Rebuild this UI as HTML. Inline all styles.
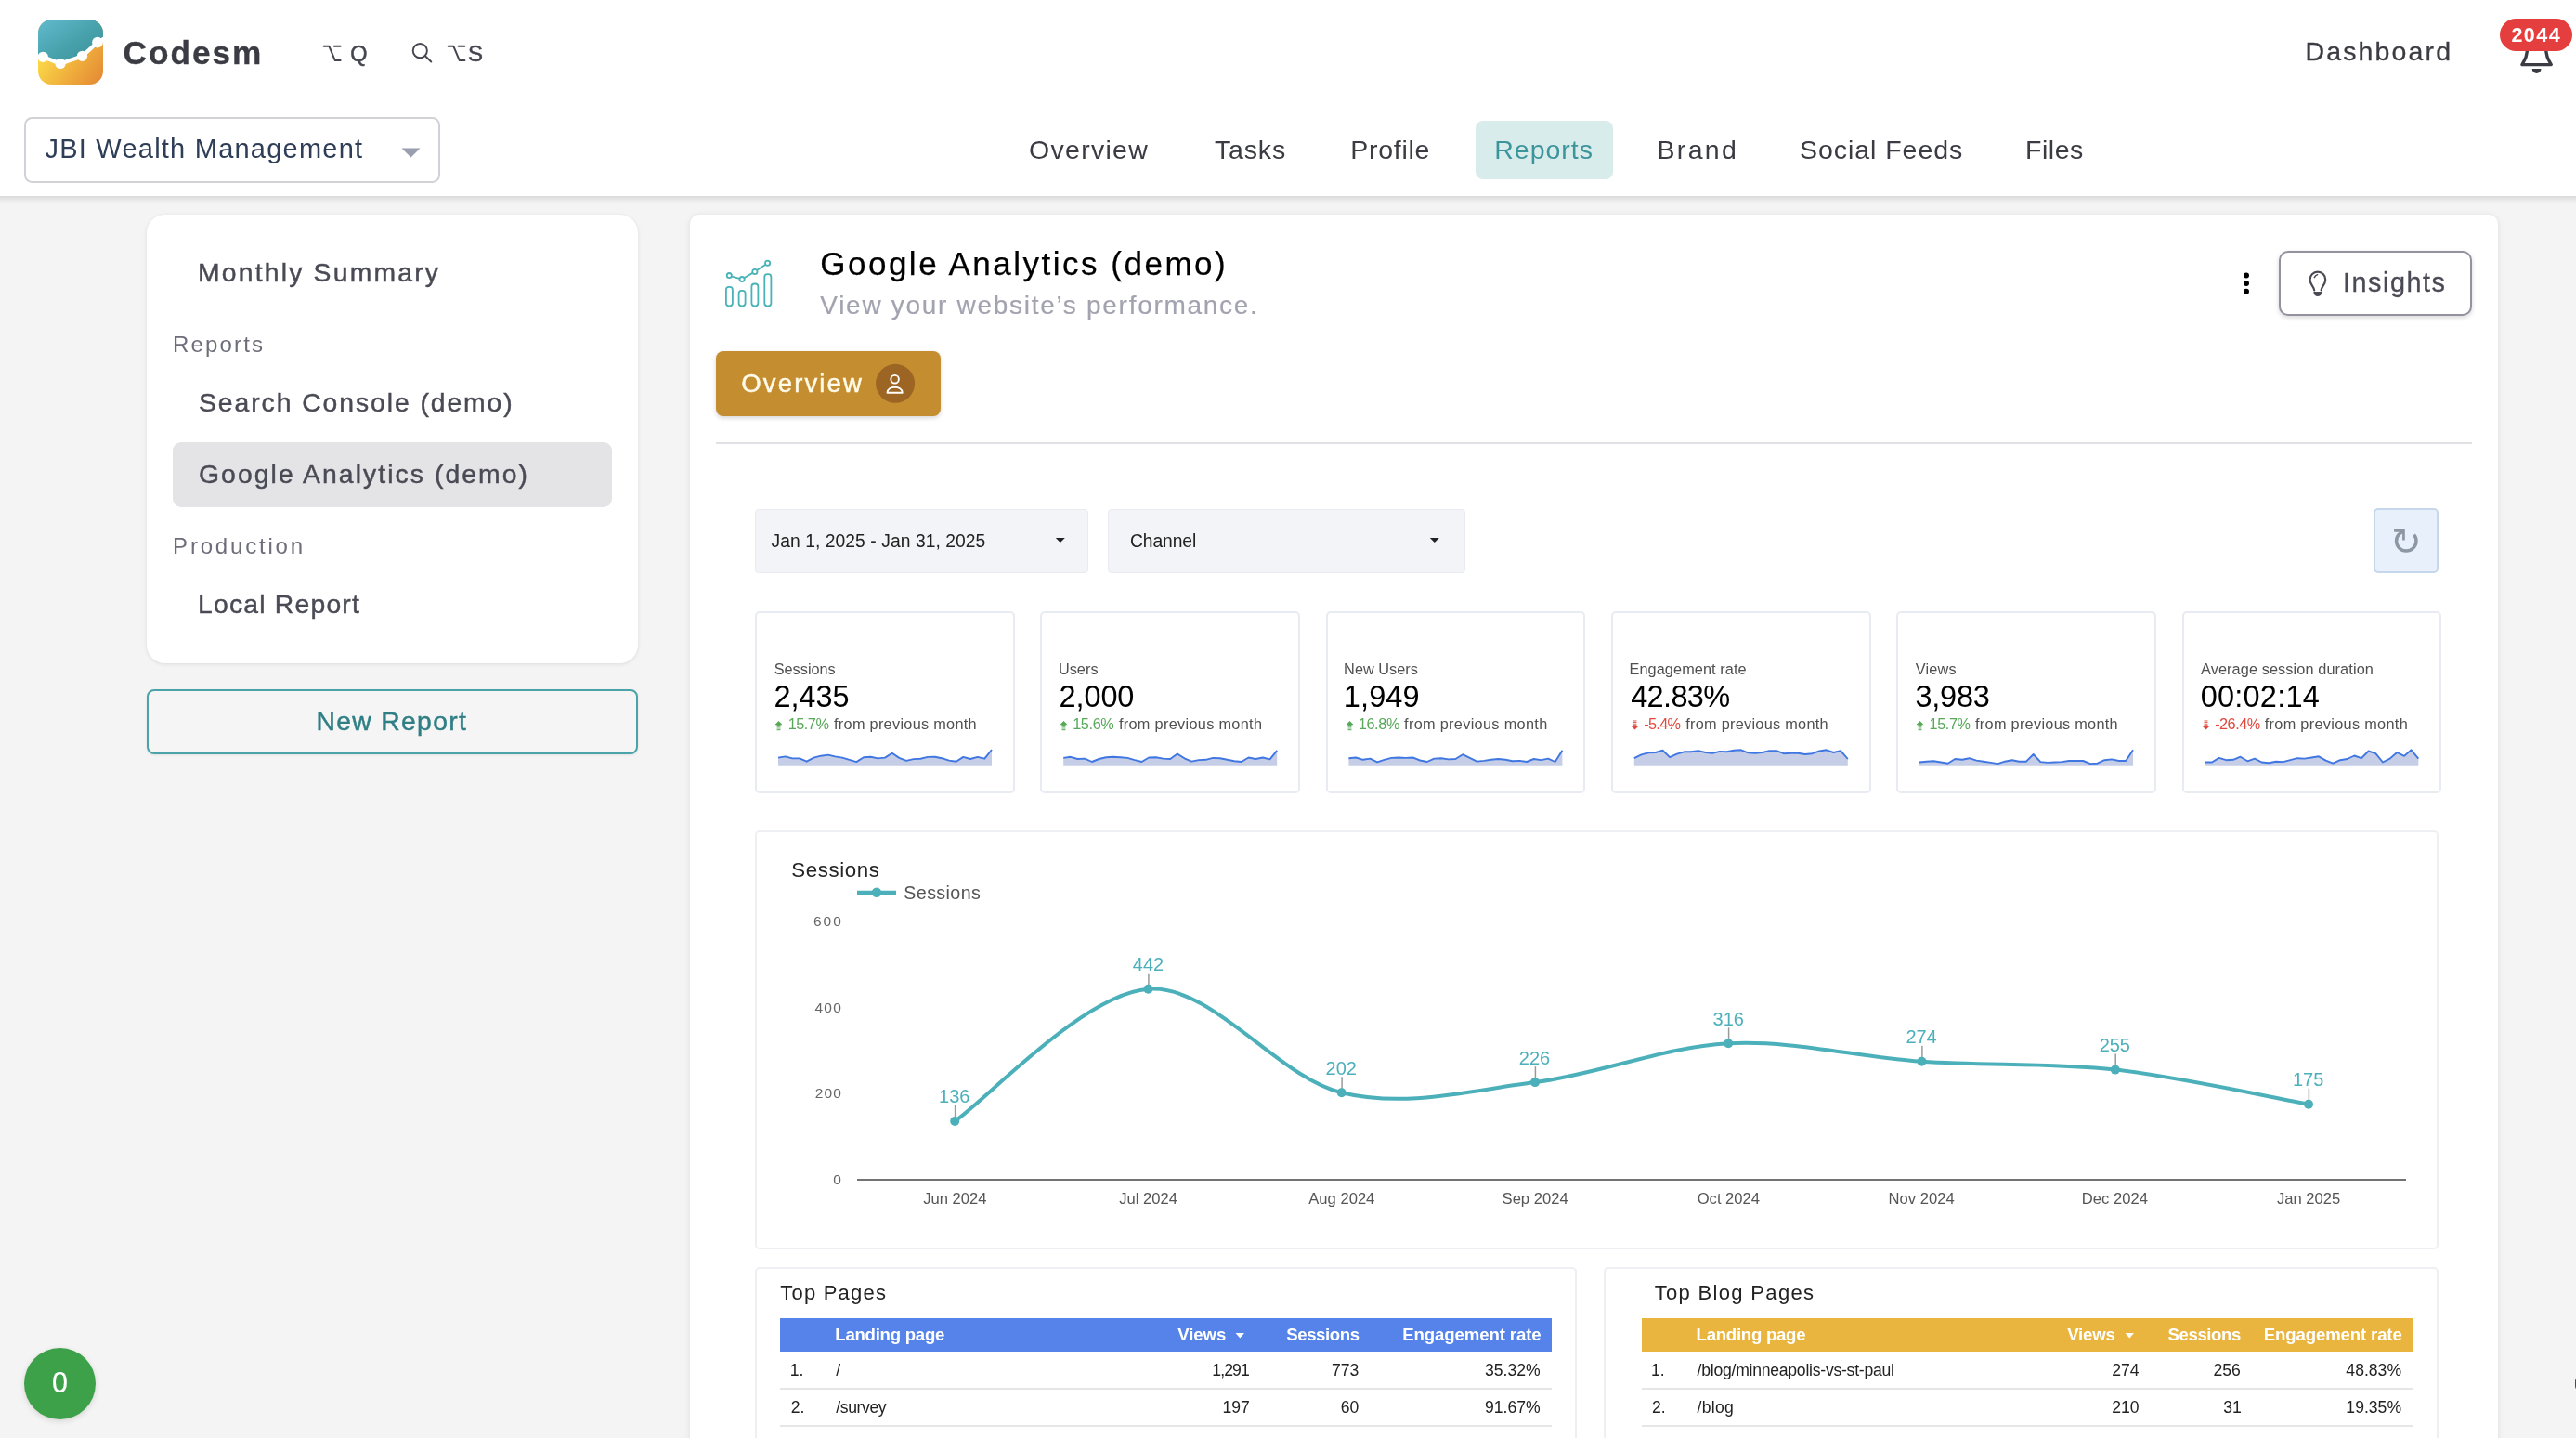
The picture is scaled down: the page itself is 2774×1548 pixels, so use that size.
<!DOCTYPE html>
<html lang="en">
<head>
<meta charset="utf-8">
<title>Codesm - Google Analytics (demo)</title>
<style>
html,body{margin:0;padding:0;}
html{width:2774px;height:1548px;overflow:hidden;}
body{width:2774px;height:1548px;overflow:hidden;position:relative;background:#f4f4f4;font-family:"Liberation Sans", sans-serif;}
#root{position:absolute;left:0;top:0;width:2774px;height:1548px;overflow:hidden;will-change:transform;}
.b{position:absolute;box-sizing:border-box;}
.t{position:absolute;white-space:pre;line-height:1;font-family:"Liberation Sans", sans-serif;}
svg{position:absolute;overflow:visible;}
</style>
</head>
<body>
<div id="root">
<div class="b" style="left:-30px;top:-10px;width:2834px;height:221px;background:#fff;box-shadow:0 2px 7px rgba(0,0,0,.16);"></div>
<svg style="left:41px;top:21px" width="70" height="70" viewBox="0 0 70 70">
<defs>
<linearGradient id="lgT" x1="0" y1="0" x2="1" y2="1"><stop offset="0" stop-color="#62bace"/><stop offset=".55" stop-color="#46a0aa"/><stop offset="1" stop-color="#3b8f98"/></linearGradient>
<linearGradient id="lgB" x1="0" y1="0.3" x2="1" y2="1"><stop offset="0" stop-color="#ffe74e"/><stop offset=".3" stop-color="#f7cb44"/><stop offset=".62" stop-color="#eeaa3b"/><stop offset="1" stop-color="#e38634"/></linearGradient>
<clipPath id="lgC"><rect x="0" y="0" width="70" height="70" rx="14.5" ry="14.5"/></clipPath>
</defs>
<g clip-path="url(#lgC)">
<rect width="70" height="70" fill="url(#lgB)"/>
<path d="M0 0H70V24.6L47.5 39.5L24 47.5L5.3 40.3L0 40.3Z" fill="url(#lgT)"/>
<path d="M-2 40.3L5.3 40.3L24 47.5L47.5 39.5L64 24.6L72 20" fill="none" stroke="#fff" stroke-width="4.2" stroke-linejoin="round"/>
<circle cx="5.3" cy="40.3" r="5.6" fill="#fff"/><circle cx="24" cy="47.5" r="5.6" fill="#fff"/><circle cx="47.5" cy="39.3" r="5.6" fill="#fff"/><circle cx="64" cy="24.6" r="5.9" fill="#fff"/>
</g></svg>
<svg style="left:0;top:0" width="600" height="100" viewBox="0 0 600 100" fill="none" stroke="#45454f" stroke-width="2" stroke-linecap="round" stroke-linejoin="round">
<path d="M348.6 49.7H354.3L360.8 65.1H366.6M359.8 49.7H366.6"/>
<path d="M482.6 49.7H488.3L494.8 65.1H500.4M493.6 49.7H500.4"/>
<circle cx="452.3" cy="54.6" r="7.6" stroke-width="1.9"/><path d="M458 60.3L464.3 66.5" stroke-width="1.9"/>
</svg>
<div class="b" style="left:26px;top:126px;width:447.5px;height:71px;background:#fff;border:2px solid #d1d1d8;border-radius:8.5px;"></div>
<svg style="left:432px;top:159px" width="22" height="12" viewBox="0 0 22 12"><path d="M0.5 0.5H20.5L10.5 10.5Z" fill="#9a9eae"/></svg>
<div class="b" style="left:1589px;top:130px;width:148px;height:63px;background:#d9ecec;border-radius:8px;"></div>
<svg style="left:2700px;top:0" width="74" height="100" viewBox="2700 0 74 100" fill="none" stroke="#3b3b43" stroke-width="3.4" stroke-linejoin="round" stroke-linecap="round">
<path d="M2721.6 50C2721.6 60 2719.5 63.5 2715.9 69.6H2747.3C2743.7 63.5 2741.6 60 2741.6 50"/>
<path d="M2726.7 74H2736.5A4.9 4.9 0 0 1 2726.7 74Z" fill="#3b3b43" stroke="none"/>
</svg>
<div class="b" style="left:2692px;top:20px;width:78px;height:35px;background:#e53e3e;border-radius:17.5px;"></div>
<div class="b" style="left:158px;top:231px;width:529px;height:483px;background:#fff;border-radius:20px;box-shadow:0 1px 4px rgba(0,0,0,.10);"></div>
<div class="b" style="left:186px;top:476px;width:473px;height:70px;background:#e4e4e6;border-radius:9px;"></div>
<div class="b" style="left:158px;top:742px;width:529px;height:70px;background:#f5f5f5;border:2px solid #4aa3a8;border-radius:8px;box-shadow:0 1px 3px rgba(0,0,0,.08);"></div>
<div class="b" style="left:26px;top:1451px;width:77px;height:77px;background:#3da14a;border-radius:38.5px;box-shadow:0 2px 6px rgba(0,0,0,.13);"></div>
<div class="b" style="left:2772.8px;top:1481px;width:12px;height:17px;background:#7b10f0;border-radius:6px;"></div>
<div class="b" style="left:743px;top:231px;width:1947px;height:1400px;background:#fff;border-radius:10px;box-shadow:0 1px 6px rgba(0,0,0,.10);"></div>
<svg style="left:770px;top:270px" width="80" height="70" viewBox="770 270 80 70" fill="none" stroke="#4ab3b8" stroke-width="1.8">
<rect x="781.9" y="308.8" width="7" height="20.5" rx="3"/>
<rect x="795.6" y="312.8" width="7" height="16.5" rx="3"/>
<rect x="809.4" y="305.5" width="7" height="23.8" rx="3"/>
<rect x="823.3" y="295.2" width="7.1" height="34.1" rx="3"/>
<path d="M788.2 297.6L796.3 299.8M801.6 299L810.4 293.9M815.4 290.8L824.1 284.9"/>
<circle cx="785.3" cy="296.6" r="2.6"/><circle cx="799.1" cy="300.6" r="2.6"/><circle cx="812.9" cy="292.5" r="2.6"/><circle cx="826.6" cy="283.2" r="2.6"/>
</svg>
<svg style="left:2410px;top:290px" width="20" height="30" viewBox="2410 290 20 30"><circle cx="2419" cy="296.4" r="3" fill="#000"/><circle cx="2419" cy="305.1" r="3" fill="#000"/><circle cx="2419" cy="313.8" r="3" fill="#000"/></svg>
<div class="b" style="left:2454px;top:270px;width:208px;height:69.5px;background:#fff;border:2px solid #92939f;border-radius:10px;box-shadow:0 2px 5px rgba(0,0,0,.16);"></div>
<svg style="left:2480px;top:285px" width="32" height="40" viewBox="2480 285 32 40" fill="none" stroke="#4a4a55" stroke-width="2.2" stroke-linecap="round">
<path d="M2492.2 312.5C2492 308.5 2487.6 306.5 2487.6 300.9A8.3 8.3 0 0 1 2504.2 300.9C2504.2 306.5 2499.8 308.5 2499.6 312.5"/>
<path d="M2492.3 298.6Q2493.3 296.3 2495.6 295.6" stroke-width="1.5"/>
<path d="M2491.4 313.9H2500.4V314.6A4.5 4.3 0 0 1 2491.4 314.6Z" fill="#4a4a55" stroke="none"/>
</svg>
<div class="b" style="left:771px;top:378px;width:242px;height:70px;background:#c48d30;border-radius:8px;box-shadow:0 2px 5px rgba(0,0,0,.17);"></div>
<svg style="left:940px;top:390px" width="50" height="50" viewBox="940 390 50 50">
<circle cx="964.1" cy="412.8" r="21" fill="#9c6523"/>
<circle cx="963.6" cy="408.2" r="4.3" fill="none" stroke="#fff" stroke-width="1.9"/>
<path d="M955.5 422.8C955.5 414.8 971.7 414.8 971.7 422.8Z" fill="none" stroke="#fff" stroke-width="1.9" stroke-linejoin="round"/>
</svg>
<div class="b" style="left:771px;top:475.5px;width:1891px;height:2px;background:#e1e1e5;"></div>
<div class="b" style="left:812.6px;top:547.5px;width:359.6px;height:69px;background:#f3f4f7;border:1px solid #e9ebf0;border-radius:4px;"></div>
<svg style="left:1136px;top:578px" width="12" height="8" viewBox="0 0 12 8"><path d="M0.8 1L10.8 1L5.8 6Z" fill="#222"/></svg>
<div class="b" style="left:1193.3px;top:547.5px;width:384.5px;height:69px;background:#f3f4f7;border:1px solid #e9ebf0;border-radius:4px;"></div>
<svg style="left:1538.5px;top:578px" width="12" height="8" viewBox="0 0 12 8"><path d="M0.8 1L10.8 1L5.8 6Z" fill="#222"/></svg>
<div class="b" style="left:2556px;top:547.2px;width:69.8px;height:69.6px;background:#e8f1fb;border:2px solid #c6d6eb;border-radius:5px;"></div>
<svg style="left:2570px;top:560px" width="44" height="44" viewBox="2570 560 44 44" fill="none" stroke="#8c97a3">
<path d="M2599.6 575.6A10.7 10.7 0 1 1 2583.3 575.2L2587.8 571.8" stroke-width="3.5"/>
<path d="M2578.1 571.45H2588.45V581.4" stroke-width="2.7" stroke-linejoin="miter"/>
</svg>
<div class="b" style="left:813.2px;top:658.2px;width:279.6px;height:196px;background:#fff;border:2px solid #e9ebf2;border-radius:5px;"></div>
<svg style="left:835.2px;top:776px" width="7" height="11" viewBox="0 0 7 11" fill="#58a85a"><path d="M3.5 0L7 3.5V4.3H5.45V5.2H1.55V4.3H0V3.5Z"/><path d="M1.55 5.8H5.45V6.8H1.55ZM1.55 7.5H5.45V8.4H1.55ZM1.55 9.1H5.45V9.9H1.55Z" opacity=".85"/><path d="M1.55 10.4H5.45V10.9H1.55Z" opacity=".4"/></svg>
<svg style="left:0;top:0" width="2774" height="1548" viewBox="0 0 2774 1548"><path d="M838.0 815.6L845.7 814.4L853.3 816.4L861.0 816.4L868.7 819.7L876.3 815.6L884.0 813.7L891.7 812.6L899.3 814.4L907.0 815.6L914.7 817.9L922.3 820.1L930.0 815.2L937.7 814.7L945.3 816.4L953.0 815.6L960.7 810.7L968.3 815.9L976.0 818.9L983.7 817.1L991.3 816.7L999.0 814.9L1006.7 814.7L1014.3 816.2L1022.0 818.6L1029.7 819.7L1037.3 814.9L1045.0 817.0L1052.7 814.9L1060.3 816.7L1068.0 807.0L1068.0 824.8L838.0 824.8Z" fill="#c5cee6"/><path d="M838.0 815.6L845.7 814.4L853.3 816.4L861.0 816.4L868.7 819.7L876.3 815.6L884.0 813.7L891.7 812.6L899.3 814.4L907.0 815.6L914.7 817.9L922.3 820.1L930.0 815.2L937.7 814.7L945.3 816.4L953.0 815.6L960.7 810.7L968.3 815.9L976.0 818.9L983.7 817.1L991.3 816.7L999.0 814.9L1006.7 814.7L1014.3 816.2L1022.0 818.6L1029.7 819.7L1037.3 814.9L1045.0 817.0L1052.7 814.9L1060.3 816.7L1068.0 807.0" fill="none" stroke="#3f76e2" stroke-width="1.9" stroke-linejoin="round"/></svg>
<div class="b" style="left:1120.4px;top:658.2px;width:279.6px;height:196px;background:#fff;border:2px solid #e9ebf2;border-radius:5px;"></div>
<svg style="left:1142.4px;top:776px" width="7" height="11" viewBox="0 0 7 11" fill="#58a85a"><path d="M3.5 0L7 3.5V4.3H5.45V5.2H1.55V4.3H0V3.5Z"/><path d="M1.55 5.8H5.45V6.8H1.55ZM1.55 7.5H5.45V8.4H1.55ZM1.55 9.1H5.45V9.9H1.55Z" opacity=".85"/><path d="M1.55 10.4H5.45V10.9H1.55Z" opacity=".4"/></svg>
<svg style="left:0;top:0" width="2774" height="1548" viewBox="0 0 2774 1548"><path d="M1145.2 815.9L1152.9 814.8L1160.5 817.0L1168.2 816.6L1175.9 820.0L1183.5 817.0L1191.2 815.2L1198.9 814.8L1206.5 815.2L1214.2 815.9L1221.9 818.1L1229.5 820.0L1237.2 815.5L1244.9 815.2L1252.5 816.6L1260.2 817.0L1267.9 811.5L1275.5 816.3L1283.2 819.6L1290.9 818.1L1298.5 817.8L1306.2 815.9L1313.9 816.3L1321.5 817.8L1329.2 819.2L1336.9 820.0L1344.5 815.5L1352.2 817.0L1359.9 815.5L1367.5 817.4L1375.2 807.8L1375.2 824.8L1145.2 824.8Z" fill="#c5cee6"/><path d="M1145.2 815.9L1152.9 814.8L1160.5 817.0L1168.2 816.6L1175.9 820.0L1183.5 817.0L1191.2 815.2L1198.9 814.8L1206.5 815.2L1214.2 815.9L1221.9 818.1L1229.5 820.0L1237.2 815.5L1244.9 815.2L1252.5 816.6L1260.2 817.0L1267.9 811.5L1275.5 816.3L1283.2 819.6L1290.9 818.1L1298.5 817.8L1306.2 815.9L1313.9 816.3L1321.5 817.8L1329.2 819.2L1336.9 820.0L1344.5 815.5L1352.2 817.0L1359.9 815.5L1367.5 817.4L1375.2 807.8" fill="none" stroke="#3f76e2" stroke-width="1.9" stroke-linejoin="round"/></svg>
<div class="b" style="left:1427.6px;top:658.2px;width:279.6px;height:196px;background:#fff;border:2px solid #e9ebf2;border-radius:5px;"></div>
<svg style="left:1449.6px;top:776px" width="7" height="11" viewBox="0 0 7 11" fill="#58a85a"><path d="M3.5 0L7 3.5V4.3H5.45V5.2H1.55V4.3H0V3.5Z"/><path d="M1.55 5.8H5.45V6.8H1.55ZM1.55 7.5H5.45V8.4H1.55ZM1.55 9.1H5.45V9.9H1.55Z" opacity=".85"/><path d="M1.55 10.4H5.45V10.9H1.55Z" opacity=".4"/></svg>
<svg style="left:0;top:0" width="2774" height="1548" viewBox="0 0 2774 1548"><path d="M1452.4 816.3L1460.1 815.5L1467.7 817.8L1475.4 816.6L1483.1 820.3L1490.7 817.8L1498.4 815.9L1506.1 815.5L1513.7 815.9L1521.4 815.5L1529.1 818.5L1536.7 820.0L1544.4 816.6L1552.1 816.3L1559.7 817.4L1567.4 817.0L1575.1 812.2L1582.7 815.9L1590.4 819.6L1598.1 818.9L1605.7 817.8L1613.4 817.0L1621.1 817.8L1628.7 819.2L1636.4 818.9L1644.1 820.0L1651.7 817.0L1659.4 818.1L1667.1 816.6L1674.7 820.0L1682.4 807.8L1682.4 824.8L1452.4 824.8Z" fill="#c5cee6"/><path d="M1452.4 816.3L1460.1 815.5L1467.7 817.8L1475.4 816.6L1483.1 820.3L1490.7 817.8L1498.4 815.9L1506.1 815.5L1513.7 815.9L1521.4 815.5L1529.1 818.5L1536.7 820.0L1544.4 816.6L1552.1 816.3L1559.7 817.4L1567.4 817.0L1575.1 812.2L1582.7 815.9L1590.4 819.6L1598.1 818.9L1605.7 817.8L1613.4 817.0L1621.1 817.8L1628.7 819.2L1636.4 818.9L1644.1 820.0L1651.7 817.0L1659.4 818.1L1667.1 816.6L1674.7 820.0L1682.4 807.8" fill="none" stroke="#3f76e2" stroke-width="1.9" stroke-linejoin="round"/></svg>
<div class="b" style="left:1735px;top:658.2px;width:279.6px;height:196px;background:#fff;border:2px solid #e9ebf2;border-radius:5px;"></div>
<svg style="left:1757px;top:775.2px" width="7" height="11" viewBox="0 0 7 11" fill="#e0483e"><path d="M1.55 5.3H5.45V6.3H7V7.1L3.5 10.6L0 7.1V6.3H1.55Z"/><path d="M1.55 0.6H5.45V1.4H1.55ZM1.55 2.1H5.45V3H1.55ZM1.55 3.7H5.45V4.7H1.55Z" opacity=".85"/><path d="M1.55 0H5.45V0.4H1.55Z" opacity=".4"/></svg>
<svg style="left:0;top:0" width="2774" height="1548" viewBox="0 0 2774 1548"><path d="M1759.8 816.2L1767.5 812.4L1775.1 810.4L1782.8 810.0L1790.5 807.7L1798.1 815.1L1805.8 811.6L1813.5 809.3L1821.1 809.3L1828.8 808.1L1836.5 810.0L1844.1 810.8L1851.8 808.9L1859.5 809.3L1867.1 807.7L1874.8 807.3L1882.5 810.4L1890.1 810.8L1897.8 810.0L1905.5 808.1L1913.1 808.1L1920.8 811.2L1928.5 810.8L1936.1 810.8L1943.8 812.0L1951.5 811.2L1959.1 808.5L1966.8 807.3L1974.5 810.0L1982.1 808.1L1989.8 817.0L1989.8 824.8L1759.8 824.8Z" fill="#c5cee6"/><path d="M1759.8 816.2L1767.5 812.4L1775.1 810.4L1782.8 810.0L1790.5 807.7L1798.1 815.1L1805.8 811.6L1813.5 809.3L1821.1 809.3L1828.8 808.1L1836.5 810.0L1844.1 810.8L1851.8 808.9L1859.5 809.3L1867.1 807.7L1874.8 807.3L1882.5 810.4L1890.1 810.8L1897.8 810.0L1905.5 808.1L1913.1 808.1L1920.8 811.2L1928.5 810.8L1936.1 810.8L1943.8 812.0L1951.5 811.2L1959.1 808.5L1966.8 807.3L1974.5 810.0L1982.1 808.1L1989.8 817.0" fill="none" stroke="#3f76e2" stroke-width="1.9" stroke-linejoin="round"/></svg>
<div class="b" style="left:2042.2px;top:658.2px;width:279.6px;height:196px;background:#fff;border:2px solid #e9ebf2;border-radius:5px;"></div>
<svg style="left:2064.2px;top:776px" width="7" height="11" viewBox="0 0 7 11" fill="#58a85a"><path d="M3.5 0L7 3.5V4.3H5.45V5.2H1.55V4.3H0V3.5Z"/><path d="M1.55 5.8H5.45V6.8H1.55ZM1.55 7.5H5.45V8.4H1.55ZM1.55 9.1H5.45V9.9H1.55Z" opacity=".85"/><path d="M1.55 10.4H5.45V10.9H1.55Z" opacity=".4"/></svg>
<svg style="left:0;top:0" width="2774" height="1548" viewBox="0 0 2774 1548"><path d="M2067.0 820.5L2074.7 819.7L2082.3 819.3L2090.0 820.5L2097.7 821.7L2105.3 817.0L2113.0 817.8L2120.7 816.2L2128.3 818.6L2136.0 819.7L2143.7 820.9L2151.3 822.1L2159.0 819.7L2166.7 818.2L2174.3 819.7L2182.0 819.7L2189.7 812.0L2197.3 820.1L2205.0 820.9L2212.7 820.5L2220.3 820.1L2228.0 819.0L2235.7 819.0L2243.3 819.0L2251.0 822.1L2258.7 821.7L2266.3 818.2L2274.0 817.4L2281.7 819.0L2289.3 819.0L2297.0 807.3L2297.0 824.8L2067.0 824.8Z" fill="#c5cee6"/><path d="M2067.0 820.5L2074.7 819.7L2082.3 819.3L2090.0 820.5L2097.7 821.7L2105.3 817.0L2113.0 817.8L2120.7 816.2L2128.3 818.6L2136.0 819.7L2143.7 820.9L2151.3 822.1L2159.0 819.7L2166.7 818.2L2174.3 819.7L2182.0 819.7L2189.7 812.0L2197.3 820.1L2205.0 820.9L2212.7 820.5L2220.3 820.1L2228.0 819.0L2235.7 819.0L2243.3 819.0L2251.0 822.1L2258.7 821.7L2266.3 818.2L2274.0 817.4L2281.7 819.0L2289.3 819.0L2297.0 807.3" fill="none" stroke="#3f76e2" stroke-width="1.9" stroke-linejoin="round"/></svg>
<div class="b" style="left:2349.5px;top:658.2px;width:279.6px;height:196px;background:#fff;border:2px solid #e9ebf2;border-radius:5px;"></div>
<svg style="left:2371.5px;top:775.2px" width="7" height="11" viewBox="0 0 7 11" fill="#e0483e"><path d="M1.55 5.3H5.45V6.3H7V7.1L3.5 10.6L0 7.1V6.3H1.55Z"/><path d="M1.55 0.6H5.45V1.4H1.55ZM1.55 2.1H5.45V3H1.55ZM1.55 3.7H5.45V4.7H1.55Z" opacity=".85"/><path d="M1.55 0H5.45V0.4H1.55Z" opacity=".4"/></svg>
<svg style="left:0;top:0" width="2774" height="1548" viewBox="0 0 2774 1548"><path d="M2374.3 820.5L2382.0 820.5L2389.6 815.9L2397.3 818.2L2405.0 817.8L2412.6 814.7L2420.3 819.3L2428.0 816.6L2435.6 820.5L2443.3 821.3L2451.0 819.7L2458.6 820.1L2466.3 818.2L2474.0 816.2L2481.6 816.6L2489.3 815.5L2497.0 814.3L2504.6 818.6L2512.3 821.7L2520.0 818.2L2527.6 817.0L2535.3 813.5L2543.0 816.2L2550.6 808.5L2558.3 811.2L2566.0 820.5L2573.6 816.6L2581.3 810.0L2589.0 813.9L2596.6 807.3L2604.3 816.6L2604.3 824.8L2374.3 824.8Z" fill="#c5cee6"/><path d="M2374.3 820.5L2382.0 820.5L2389.6 815.9L2397.3 818.2L2405.0 817.8L2412.6 814.7L2420.3 819.3L2428.0 816.6L2435.6 820.5L2443.3 821.3L2451.0 819.7L2458.6 820.1L2466.3 818.2L2474.0 816.2L2481.6 816.6L2489.3 815.5L2497.0 814.3L2504.6 818.6L2512.3 821.7L2520.0 818.2L2527.6 817.0L2535.3 813.5L2543.0 816.2L2550.6 808.5L2558.3 811.2L2566.0 820.5L2573.6 816.6L2581.3 810.0L2589.0 813.9L2596.6 807.3L2604.3 816.6" fill="none" stroke="#3f76e2" stroke-width="1.9" stroke-linejoin="round"/></svg>
<div class="b" style="left:813px;top:894px;width:1813px;height:450.8px;background:#fff;border:2px solid #edeff3;border-radius:5px;"></div>
<svg style="left:0;top:0" width="2774" height="1548" viewBox="0 0 2774 1548"><path d="M923 1270.0H2591" stroke="#444" stroke-width="1.6" fill="none"/><path d="M923 960.8H965" stroke="#4cb0bb" stroke-width="4.2" fill="none"/><circle cx="944" cy="960.8" r="5.2" fill="#4cb0bb"/><path d="M1028.6 1189.9V1202.9" stroke="#9a9a9a" stroke-width="1.5" fill="none"/><path d="M1236.9 1047.8V1060.8" stroke="#9a9a9a" stroke-width="1.5" fill="none"/><path d="M1445.1 1159.2V1172.2" stroke="#9a9a9a" stroke-width="1.5" fill="none"/><path d="M1653.4 1148.1V1161.1" stroke="#9a9a9a" stroke-width="1.5" fill="none"/><path d="M1861.6 1106.3V1119.3" stroke="#9a9a9a" stroke-width="1.5" fill="none"/><path d="M2069.9 1125.8V1138.8" stroke="#9a9a9a" stroke-width="1.5" fill="none"/><path d="M2278.2 1134.6V1147.6" stroke="#9a9a9a" stroke-width="1.5" fill="none"/><path d="M2486.4 1171.7V1184.7" stroke="#9a9a9a" stroke-width="1.5" fill="none"/><path d="M1028.2 1206.9C1062.9 1183.2 1167.0 1069.9 1236.5 1064.8C1305.9 1059.7 1375.3 1159.5 1444.7 1176.2C1514.1 1192.9 1583.6 1173.9 1653.0 1165.1C1722.4 1156.2 1791.8 1127.0 1861.2 1123.3C1930.7 1119.6 2000.1 1138.1 2069.5 1142.8C2138.9 1147.5 2208.3 1143.9 2277.8 1151.6C2347.2 1159.3 2451.3 1182.6 2486.0 1188.7" stroke="#4cb0bb" stroke-width="4" fill="none" stroke-linecap="round"/><circle cx="1028.2" cy="1206.9" r="5" fill="#4cb0bb"/><circle cx="1236.5" cy="1064.8" r="5" fill="#4cb0bb"/><circle cx="1444.7" cy="1176.2" r="5" fill="#4cb0bb"/><circle cx="1653.0" cy="1165.1" r="5" fill="#4cb0bb"/><circle cx="1861.2" cy="1123.3" r="5" fill="#4cb0bb"/><circle cx="2069.5" cy="1142.8" r="5" fill="#4cb0bb"/><circle cx="2277.8" cy="1151.6" r="5" fill="#4cb0bb"/><circle cx="2486.0" cy="1188.7" r="5" fill="#4cb0bb"/></svg>
<div class="b" style="left:813px;top:1364.2px;width:884.5px;height:300px;background:#fff;border:2px solid #edeff3;border-radius:5px;"></div>
<div class="b" style="left:840px;top:1419.3px;width:831px;height:36px;background:#5583ea;"></div>
<svg style="left:1330px;top:1433.5px" width="11" height="8" viewBox="0 0 11 8"><path d="M0.6 1H10L5.3 6.4Z" fill="#fff"/></svg>
<div class="b" style="left:840px;top:1494px;width:831px;height:2px;background:#e6e6e6;"></div>
<div class="b" style="left:840px;top:1534px;width:831px;height:2px;background:#e6e6e6;"></div>
<div class="b" style="left:1727px;top:1364.2px;width:898.5px;height:300px;background:#fff;border:2px solid #edeff3;border-radius:5px;"></div>
<div class="b" style="left:1767.5px;top:1419.3px;width:830.2px;height:36px;background:#e9b53e;"></div>
<svg style="left:2288px;top:1433.5px" width="11" height="8" viewBox="0 0 11 8"><path d="M0.6 1H10L5.3 6.4Z" fill="#fff"/></svg>
<div class="b" style="left:1767.5px;top:1494px;width:830.2px;height:2px;background:#e6e6e6;"></div>
<div class="b" style="left:1767.5px;top:1534px;width:830.2px;height:2px;background:#e6e6e6;"></div>
<span class="t" style="left:132.50px;top:39.00px;font-size:35.2px;color:#3b3b43;letter-spacing:1.992px;font-weight:700;-webkit-text-stroke:0.3px #3b3b43;">Codesm</span>
<span class="t" style="left:377.20px;top:47.00px;font-size:23.5px;color:#45454f;-webkit-text-stroke:0.5px #45454f;">Q</span>
<span class="t" style="left:504.00px;top:46.00px;font-size:24px;color:#45454f;-webkit-text-stroke:0.5px #45454f;">S</span>
<span class="t" style="left:48.50px;top:146.00px;font-size:29px;color:#2f3e57;letter-spacing:1.227px;">JBI Wealth Management</span>
<span class="t" style="left:1108.00px;top:147.00px;font-size:28.5px;color:#3b3b43;letter-spacing:1.287px;">Overview</span>
<span class="t" style="left:1308.00px;top:147.00px;font-size:28.5px;color:#3b3b43;letter-spacing:0.825px;">Tasks</span>
<span class="t" style="left:1454.20px;top:147.00px;font-size:28.5px;color:#3b3b43;letter-spacing:0.745px;">Profile</span>
<span class="t" style="left:1609.20px;top:147.00px;font-size:28.5px;color:#3d959c;letter-spacing:1.010px;">Reports</span>
<span class="t" style="left:1784.50px;top:147.00px;font-size:28.5px;color:#3b3b43;letter-spacing:2.325px;">Brand</span>
<span class="t" style="left:1938.00px;top:147.00px;font-size:28.5px;color:#3b3b43;letter-spacing:0.954px;">Social Feeds</span>
<span class="t" style="left:2181.00px;top:147.00px;font-size:28.5px;color:#3b3b43;letter-spacing:0.519px;">Files</span>
<span class="t" style="left:2482.40px;top:41.00px;font-size:28.5px;color:#3b3b43;letter-spacing:2.153px;-webkit-text-stroke:0.3px #3b3b43;">Dashboard</span>
<span class="t" style="left:2704.40px;top:28.00px;font-size:21.5px;color:#fff;letter-spacing:1.509px;font-weight:700;">2044</span>
<span class="t" style="left:213.00px;top:279.00px;font-size:28.3px;color:#4a4a55;letter-spacing:2.210px;-webkit-text-stroke:0.45px #4a4a55;">Monthly Summary</span>
<span class="t" style="left:186.10px;top:359.00px;font-size:24px;color:#6e6e7a;letter-spacing:2.161px;">Reports</span>
<span class="t" style="left:214.00px;top:419.00px;font-size:28.3px;color:#4a4a55;letter-spacing:1.945px;-webkit-text-stroke:0.45px #4a4a55;">Search Console (demo)</span>
<span class="t" style="left:214.00px;top:496.00px;font-size:28.3px;color:#4a4a55;letter-spacing:2.077px;-webkit-text-stroke:0.45px #4a4a55;">Google Analytics (demo)</span>
<span class="t" style="left:186.10px;top:576.00px;font-size:24px;color:#6e6e7a;letter-spacing:2.801px;">Production</span>
<span class="t" style="left:213.00px;top:636.00px;font-size:28.3px;color:#4a4a55;letter-spacing:1.220px;-webkit-text-stroke:0.45px #4a4a55;">Local Report</span>
<span class="t" style="left:340.50px;top:762.00px;font-size:28.3px;color:#2f7f85;letter-spacing:1.329px;-webkit-text-stroke:0.45px #2f7f85;">New Report</span>
<span class="t" style="left:56.00px;top:1473.00px;font-size:30.5px;color:#fff;-webkit-text-stroke:0.2px #fff;">0</span>
<span class="t" style="left:883.20px;top:266.00px;font-size:35px;color:#000;letter-spacing:2.511px;-webkit-text-stroke:0.25px #000;">Google Analytics (demo)</span>
<span class="t" style="left:883.30px;top:315.00px;font-size:28px;color:#a3a3b0;letter-spacing:1.706px;-webkit-text-stroke:0.2px #a3a3b0;">View your website’s performance.</span>
<span class="t" style="left:2523.00px;top:290.00px;font-size:28.8px;color:#4a4a55;letter-spacing:1.537px;-webkit-text-stroke:0.3px #4a4a55;">Insights</span>
<span class="t" style="left:798.30px;top:399.00px;font-size:27.5px;color:#fffbea;letter-spacing:2.136px;-webkit-text-stroke:0.45px #fffbea;">Overview</span>
<span class="t" style="left:830.50px;top:573.00px;font-size:19.3px;color:#222;letter-spacing:0.057px;">Jan 1, 2025 - Jan 31, 2025</span>
<span class="t" style="left:1217.00px;top:573.00px;font-size:19.3px;color:#222;letter-spacing:-0.090px;">Channel</span>
<span class="t" style="left:833.70px;top:712.00px;font-size:16.3px;color:#505050;">Sessions</span>
<span class="t" style="left:833.40px;top:734.00px;font-size:32.5px;color:#000;letter-spacing:-0.064px;">2,435</span>
<span class="t" style="left:848.80px;top:771.00px;font-size:16.3px;color:#58a85a;letter-spacing:-0.522px;">15.7%</span>
<span class="t" style="left:898.00px;top:771.00px;font-size:16.3px;color:#505050;letter-spacing:0.292px;">from previous month</span>
<span class="t" style="left:1139.90px;top:712.00px;font-size:16.3px;color:#505050;letter-spacing:0.028px;">Users</span>
<span class="t" style="left:1140.60px;top:734.00px;font-size:32.5px;color:#000;letter-spacing:-0.120px;">2,000</span>
<span class="t" style="left:1155.20px;top:771.00px;font-size:16.3px;color:#58a85a;letter-spacing:-0.385px;">15.6%</span>
<span class="t" style="left:1204.88px;top:771.00px;font-size:16.3px;color:#505050;letter-spacing:0.317px;">from previous month</span>
<span class="t" style="left:1447.10px;top:712.00px;font-size:16.3px;color:#505050;letter-spacing:0.033px;">New Users</span>
<span class="t" style="left:1446.80px;top:734.00px;font-size:32.5px;color:#000;letter-spacing:0.129px;">1,949</span>
<span class="t" style="left:1462.77px;top:771.00px;font-size:16.3px;color:#58a85a;letter-spacing:-0.385px;">16.8%</span>
<span class="t" style="left:1512.08px;top:771.00px;font-size:16.3px;color:#505050;letter-spacing:0.317px;">from previous month</span>
<span class="t" style="left:1754.50px;top:712.00px;font-size:16.3px;color:#505050;letter-spacing:0.082px;">Engagement rate</span>
<span class="t" style="left:1756.20px;top:734.00px;font-size:32.5px;color:#000;letter-spacing:-0.646px;">42.83%</span>
<span class="t" style="left:1770.30px;top:771.00px;font-size:16.3px;color:#e0483e;letter-spacing:-0.714px;">-5.4%</span>
<span class="t" style="left:1815.30px;top:771.00px;font-size:16.3px;color:#505050;letter-spacing:0.270px;">from previous month</span>
<span class="t" style="left:2062.70px;top:712.00px;font-size:16.3px;color:#505050;letter-spacing:0.176px;">Views</span>
<span class="t" style="left:2062.40px;top:734.00px;font-size:32.5px;color:#000;letter-spacing:-0.214px;">3,983</span>
<span class="t" style="left:2077.50px;top:771.00px;font-size:16.3px;color:#58a85a;letter-spacing:-0.397px;">15.7%</span>
<span class="t" style="left:2127.00px;top:771.00px;font-size:16.3px;color:#505050;letter-spacing:0.292px;">from previous month</span>
<span class="t" style="left:2370.00px;top:712.00px;font-size:16.3px;color:#505050;letter-spacing:0.105px;">Average session duration</span>
<span class="t" style="left:2369.70px;top:734.00px;font-size:32.5px;color:#000;letter-spacing:0.224px;">00:02:14</span>
<span class="t" style="left:2385.20px;top:771.00px;font-size:16.3px;color:#e0483e;letter-spacing:-0.522px;">-26.4%</span>
<span class="t" style="left:2438.70px;top:771.00px;font-size:16.3px;color:#505050;letter-spacing:0.314px;">from previous month</span>
<span class="t" style="left:852.30px;top:926.00px;font-size:22.3px;color:#252525;letter-spacing:0.582px;">Sessions</span>
<span class="t" style="left:973.30px;top:952.00px;font-size:19.7px;color:#555;letter-spacing:0.380px;">Sessions</span>
<span class="t" style="left:1011.08px;top:1170.00px;font-size:20px;color:#4cb0bb;">136</span>
<span class="t" style="left:994.17px;top:1283.00px;font-size:16.6px;color:#555;">Jun 2024</span>
<span class="t" style="left:1219.84px;top:1028.00px;font-size:20px;color:#4cb0bb;">442</span>
<span class="t" style="left:1205.21px;top:1283.00px;font-size:16.6px;color:#555;">Jul 2024</span>
<span class="t" style="left:1427.60px;top:1140.00px;font-size:20px;color:#4cb0bb;">202</span>
<span class="t" style="left:1409.31px;top:1283.00px;font-size:16.6px;color:#555;">Aug 2024</span>
<span class="t" style="left:1635.86px;top:1129.00px;font-size:20px;color:#4cb0bb;">226</span>
<span class="t" style="left:1617.57px;top:1283.00px;font-size:16.6px;color:#555;">Sep 2024</span>
<span class="t" style="left:1844.62px;top:1087.00px;font-size:20px;color:#4cb0bb;">316</span>
<span class="t" style="left:1827.68px;top:1283.00px;font-size:16.6px;color:#555;">Oct 2024</span>
<span class="t" style="left:2052.38px;top:1106.00px;font-size:20px;color:#4cb0bb;">274</span>
<span class="t" style="left:2033.60px;top:1283.00px;font-size:16.6px;color:#555;">Nov 2024</span>
<span class="t" style="left:2260.64px;top:1115.00px;font-size:20px;color:#4cb0bb;">255</span>
<span class="t" style="left:2241.86px;top:1283.00px;font-size:16.6px;color:#555;">Dec 2024</span>
<span class="t" style="left:2468.90px;top:1152.00px;font-size:20px;color:#4cb0bb;">175</span>
<span class="t" style="left:2451.99px;top:1283.00px;font-size:16.6px;color:#555;">Jan 2025</span>
<span class="t" style="left:875.90px;top:984.00px;font-size:15.5px;color:#666;letter-spacing:2.030px;">600</span>
<span class="t" style="left:877.40px;top:1077.00px;font-size:15.5px;color:#666;letter-spacing:1.280px;">400</span>
<span class="t" style="left:877.80px;top:1169.00px;font-size:15.5px;color:#666;letter-spacing:1.080px;">200</span>
<span class="t" style="left:897.20px;top:1262.00px;font-size:15.5px;color:#666;">0</span>
<span class="t" style="left:840.20px;top:1381.00px;font-size:22px;color:#222;letter-spacing:1.230px;">Top Pages</span>
<span class="t" style="left:899.30px;top:1428.00px;font-size:18.6px;color:#fff;letter-spacing:-0.256px;font-weight:700;">Landing page</span>
<span class="t" style="left:1268.30px;top:1428.00px;font-size:18.6px;color:#fff;letter-spacing:-0.084px;font-weight:700;">Views</span>
<span class="t" style="left:1385.20px;top:1428.00px;font-size:18.6px;color:#fff;letter-spacing:-0.387px;font-weight:700;">Sessions</span>
<span class="t" style="left:1510.30px;top:1428.00px;font-size:18.6px;color:#fff;letter-spacing:-0.115px;font-weight:700;">Engagement rate</span>
<span class="t" style="left:850.80px;top:1467.00px;font-size:17.6px;color:#222;">1.</span>
<span class="t" style="left:900.30px;top:1467.00px;font-size:17.6px;color:#222;">/</span>
<span class="t" style="left:1305.30px;top:1467.00px;font-size:17.6px;color:#222;letter-spacing:-0.886px;">1,291</span>
<span class="t" style="left:1434.03px;top:1467.00px;font-size:17.6px;color:#222;">773</span>
<span class="t" style="left:1598.97px;top:1467.00px;font-size:17.6px;color:#222;">35.32%</span>
<span class="t" style="left:851.80px;top:1507.00px;font-size:17.6px;color:#222;">2.</span>
<span class="t" style="left:900.30px;top:1507.00px;font-size:17.6px;color:#222;letter-spacing:-0.394px;">/survey</span>
<span class="t" style="left:1316.43px;top:1507.00px;font-size:17.6px;color:#222;">197</span>
<span class="t" style="left:1443.82px;top:1507.00px;font-size:17.6px;color:#222;">60</span>
<span class="t" style="left:1598.97px;top:1507.00px;font-size:17.6px;color:#222;">91.67%</span>
<span class="t" style="left:1781.70px;top:1381.00px;font-size:22px;color:#222;letter-spacing:1.323px;">Top Blog Pages</span>
<span class="t" style="left:1826.60px;top:1428.00px;font-size:18.6px;color:#fff;letter-spacing:-0.265px;font-weight:700;">Landing page</span>
<span class="t" style="left:2226.20px;top:1428.00px;font-size:18.6px;color:#fff;letter-spacing:-0.159px;font-weight:700;">Views</span>
<span class="t" style="left:2334.60px;top:1428.00px;font-size:18.6px;color:#fff;letter-spacing:-0.415px;font-weight:700;">Sessions</span>
<span class="t" style="left:2437.80px;top:1428.00px;font-size:18.6px;color:#fff;letter-spacing:-0.137px;font-weight:700;">Engagement rate</span>
<span class="t" style="left:1778.00px;top:1467.00px;font-size:17.6px;color:#222;">1.</span>
<span class="t" style="left:1827.60px;top:1467.00px;font-size:17.6px;color:#222;letter-spacing:-0.250px;">/blog/minneapolis-vs-st-paul</span>
<span class="t" style="left:2274.13px;top:1467.00px;font-size:17.6px;color:#222;">274</span>
<span class="t" style="left:2383.43px;top:1467.00px;font-size:17.6px;color:#222;">256</span>
<span class="t" style="left:2526.37px;top:1467.00px;font-size:17.6px;color:#222;">48.83%</span>
<span class="t" style="left:1779.00px;top:1507.00px;font-size:17.6px;color:#222;">2.</span>
<span class="t" style="left:1827.60px;top:1507.00px;font-size:17.6px;color:#222;letter-spacing:0.243px;">/blog</span>
<span class="t" style="left:2274.13px;top:1507.00px;font-size:17.6px;color:#222;">210</span>
<span class="t" style="left:2394.22px;top:1507.00px;font-size:17.6px;color:#222;">31</span>
<span class="t" style="left:2526.37px;top:1507.00px;font-size:17.6px;color:#222;">19.35%</span>
</div>
</body>
</html>
